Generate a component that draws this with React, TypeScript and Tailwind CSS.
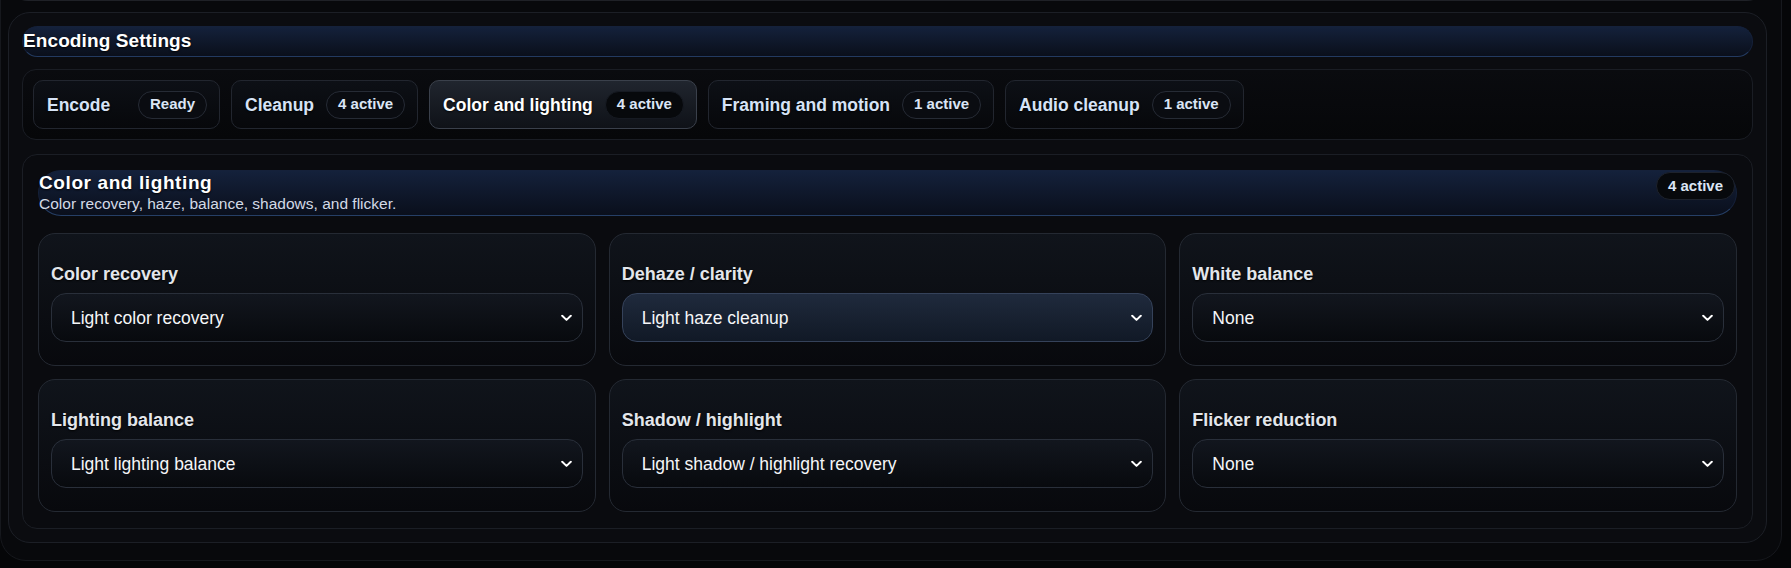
import React from "react";

type Tab = { label: string; badge: string; active?: boolean };

const tabs: Tab[] = [
  { label: "Encode", badge: "Ready" },
  { label: "Cleanup", badge: "4 active" },
  { label: "Color and lighting", badge: "4 active", active: true },
  { label: "Framing and motion", badge: "1 active" },
  { label: "Audio cleanup", badge: "1 active" },
];

type Setting = { label: string; value: string; highlight?: boolean };

const settings: Setting[] = [
  { label: "Color recovery", value: "Light color recovery" },
  { label: "Dehaze / clarity", value: "Light haze cleanup", highlight: true },
  { label: "White balance", value: "None" },
  { label: "Lighting balance", value: "Light lighting balance" },
  { label: "Shadow / highlight", value: "Light shadow / highlight recovery" },
  { label: "Flicker reduction", value: "None" },
];

function Chevron() {
  return (
    <svg
      width="11"
      height="7"
      viewBox="0 0 11 7"
      fill="none"
      className="pointer-events-none absolute right-[11px] top-1/2 -translate-y-1/2"
    >
      <path d="M1.2 1.2L5.5 5.4L9.8 1.2" stroke="#ffffff" strokeWidth="2" strokeLinecap="round" strokeLinejoin="round" />
    </svg>
  );
}

function SettingCard({ s }: { s: Setting }) {
  return (
    <div className="flex h-[133px] flex-col rounded-[17px] border border-[#242932] bg-gradient-to-b from-[#10141b] to-[#08090d] px-[12px] pt-[29px] pb-[22px]">
      <div className="text-[18px] font-bold leading-[22px] text-[#e3e6eb] [text-shadow:0_1px_2px_rgba(0,0,0,0.9)]">
        {s.label}
      </div>
      <div className="relative mt-[8px]">
        <select
          defaultValue={s.value}
          className={
            "h-[49px] w-full appearance-none rounded-[15px] border pl-[19px] pr-[30px] text-[17.5px] leading-[20px] text-[#f5f6f8] outline-none " +
            (s.highlight
              ? "border-[#35425a] bg-gradient-to-b from-[#1f2a3d] to-[#111926]"
              : "border-[#292f3a] bg-gradient-to-b from-[#12161e] to-[#080a0e]")
          }
        >
          <option value={s.value}>{s.value}</option>
          <option value="None-alt">None</option>
        </select>
        <Chevron />
      </div>
    </div>
  );
}

export default function App() {
  return (
    <div className="h-[568px] w-[1791px] overflow-hidden bg-[#050608] font-['Liberation_Sans',Arial,sans-serif]">
      <div className="mt-[-40px] w-[1782px] rounded-[26px] border border-[#16181d] bg-[#08090c] pb-[17px] pl-[7px] pr-[14px]">
        {/* previous panel (bottom edge visible) */}
        <div className="h-[40px] rounded-b-[20px] border border-t-0 border-[#1f2127] bg-[#0b0c10]" />

        {/* main panel */}
        <div className="mt-[11px] rounded-[22px] border border-[#1c1f26] bg-[#0b0c10] p-[13px]">
          <div className="flex h-[31px] items-center rounded-full border border-[#15213a] border-b-[#233a60] bg-gradient-to-b from-[#14213b] to-[#0a0f1b]">
            <span className="text-[19px] font-bold tracking-[0.1px] text-white [text-shadow:0_1px_2px_rgba(0,0,0,0.9)]">
              Encoding Settings
            </span>
          </div>

          {/* tabs */}
          <div className="mt-[12px] flex flex-wrap gap-[11px] rounded-[14px] border border-[#1a1d24] bg-gradient-to-b from-[#0a0b0f] to-[#060709] p-[10px]">
            {tabs.map((t) => (
              <div
                key={t.label}
                className={
                  "flex h-[49px] min-w-[187px] items-center justify-between gap-[12px] rounded-[10px] border pl-[13px] pr-[12px] " +
                  (t.active
                    ? "border-[#3a404b] bg-gradient-to-b from-[#20252e] to-[#0f1218]"
                    : "border-[#22262f] bg-gradient-to-b from-[#0d1016] to-[#07080b]")
                }
              >
                <span
                  className={
                    "text-[17.5px] font-bold leading-[20px] [text-shadow:0_1px_2px_rgba(0,0,0,0.8)] " +
                    (t.active ? "text-white" : "text-[#d6e3f6]")
                  }
                >
                  {t.label}
                </span>
                <span
                  className={
                    "flex h-[28px] items-center rounded-full border px-[11px] text-[15px] font-bold text-[#dbe5f5] " +
                    (t.active ? "border-[#161a22] bg-[#07090c]" : "border-[#262b35] bg-[#0a0c11]")
                  }
                >
                  {t.badge}
                </span>
              </div>
            ))}
          </div>

          {/* section */}
          <div className="mt-[14px] rounded-[15px] border border-[#1b1e25] bg-[#0a0b0f] px-[15px] pt-[15px] pb-[16px]">
            <div className="flex h-[46px] items-start justify-between rounded-[24px] border border-[#15213a] border-b-[#263f66] bg-gradient-to-b from-[#14213b] to-[#0a0f1c]">
              <div className="flex flex-col pt-[1px]">
                <span className="text-[19px] font-bold leading-[22px] tracking-[0.6px] text-white [text-shadow:0_1px_2px_rgba(0,0,0,0.9)]">
                  Color and lighting
                </span>
                <span className="text-[15.5px] leading-[20px] text-[#d3dae6]">
                  Color recovery, haze, balance, shadows, and flicker.
                </span>
              </div>
              <span className="mr-[1px] mt-[1px] flex h-[28px] items-center rounded-full border border-[#1d222c] bg-[#07090c] px-[11px] text-[15px] font-bold text-[#dbe5f5]">
                4 active
              </span>
            </div>

            <div className="mt-[17px] grid grid-cols-3 gap-[13px]">
              {settings.map((s) => (
                <SettingCard key={s.label} s={s} />
              ))}
            </div>
          </div>
        </div>
      </div>
    </div>
  );
}
